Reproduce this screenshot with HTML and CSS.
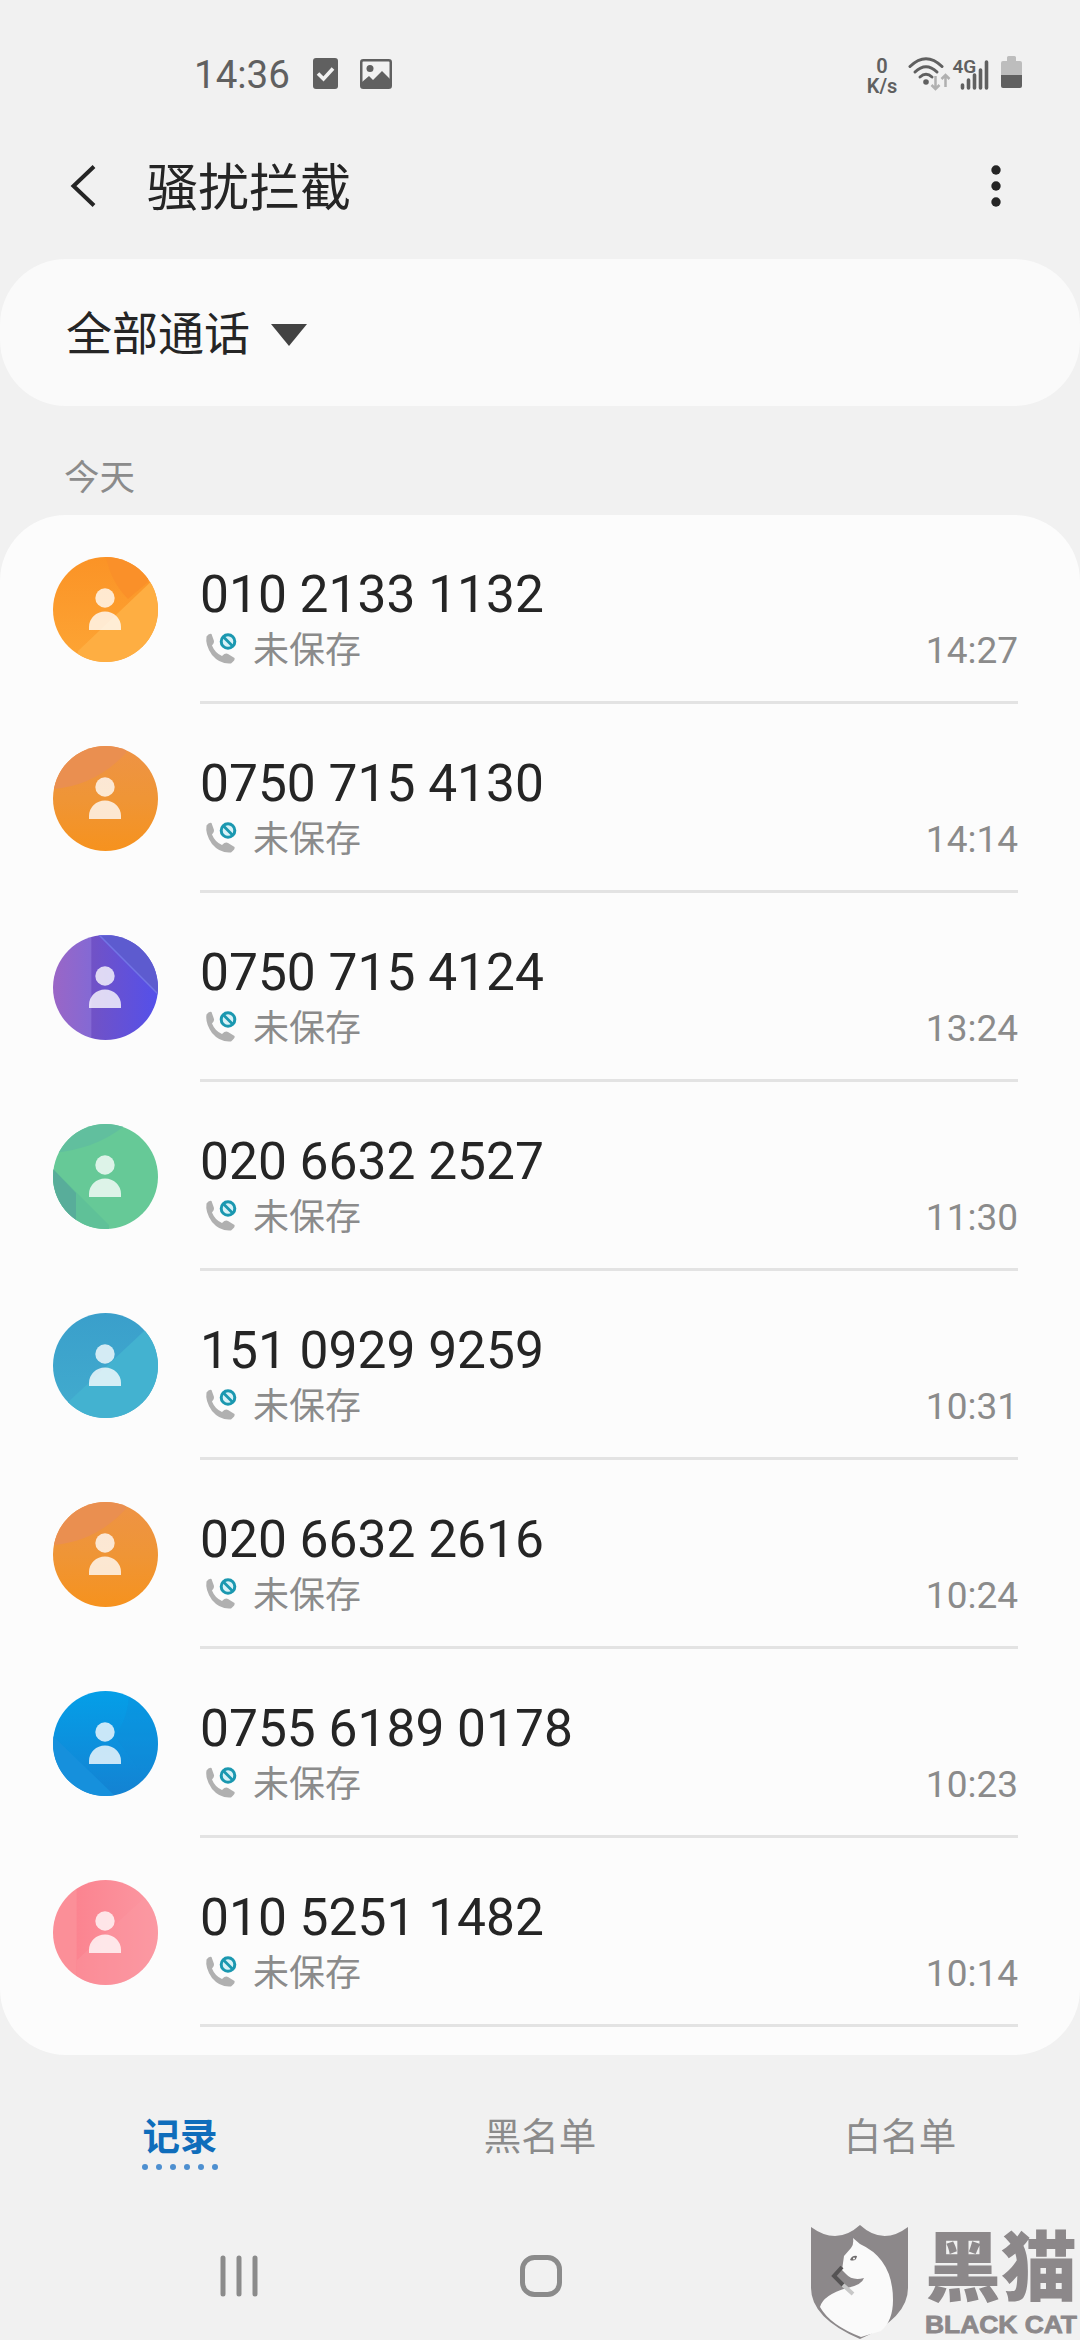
FILE: index.html
```html
<!DOCTYPE html>
<html lang="zh-CN">
<head>
<meta charset="utf-8">
<title>骚扰拦截</title>
<link rel="stylesheet" href="styles.css">
</head>
<body>
<svg class="defs" width="0" height="0">
  <defs>
    <clipPath id="round"><circle cx="52.5" cy="52.5" r="52.5"/></clipPath>
    <linearGradient id="gAmber" x1="0" y1="0" x2="0" y2="1"><stop offset="0" stop-color="#fb9326"/><stop offset="1" stop-color="#fda535"/></linearGradient>
    <linearGradient id="gOrange" x1="0" y1="0" x2="0" y2="1"><stop offset="0" stop-color="#ee9345"/><stop offset=".5" stop-color="#ef9536"/><stop offset="1" stop-color="#f6921e"/></linearGradient>
    <linearGradient id="gPurple"><stop offset="0" stop-color="#9a66c6"/><stop offset=".36" stop-color="#8469d4"/><stop offset=".37" stop-color="#7152c6"/><stop offset="1" stop-color="#5450ea"/></linearGradient>
    <linearGradient id="gBlue" x1="0" y1="0" x2="0" y2="1"><stop offset="0" stop-color="#049fe8"/><stop offset="1" stop-color="#1482d2"/></linearGradient>
    <linearGradient id="gPink"><stop offset="0" stop-color="#fb8f98"/><stop offset=".22" stop-color="#fb8f98"/><stop offset=".23" stop-color="#fb8490"/><stop offset="1" stop-color="#fb98a2"/></linearGradient>
    <linearGradient id="gCyan" x1="0" y1="0" x2="0" y2="1"><stop offset="0" stop-color="#3a9fcb"/><stop offset="1" stop-color="#42acce"/></linearGradient>
    <symbol id="person" viewBox="0 0 105 105"><circle cx="52" cy="41" r="9.7"/><path d="M36 73v-3a16 15.500 0 0 1 32 0v3z"/></symbol>
    <symbol id="amber" viewBox="0 0 105 105"><g clip-path="url(#round)"><path fill="url(#gAmber)" d="M0 0h105v105H0z"/><path fill="#fa9029" d="M53 0q5 25 22 42l20-17V0z"/><path fill="#feae42" d="M105 18L25 94v11h80z"/></g></symbol>
    <symbol id="orange" viewBox="0 0 105 105"><g clip-path="url(#round)"><path fill="url(#gOrange)" d="M0 0h105v105H0z"/><path fill="#ea8f50" d="M0 43Q42 40 73 7V0H0z"/></g></symbol>
    <symbol id="purple" viewBox="0 0 105 105"><g clip-path="url(#round)"><path fill="url(#gPurple)" d="M0 0h105v105H0z"/><path fill="#5d5bcf" stroke="#7274e5" stroke-width="1.500" d="M46 0l60 60V-2z"/></g></symbol>
    <symbol id="green" viewBox="0 0 105 105"><g clip-path="url(#round)"><path fill="#66c997" d="M0 0h105v105H0z"/><path fill="#61bf9e" d="M0 29Q42 25 70 3V0H0z"/><path fill="#5fc198" d="M0 45l56 56v4H0z"/><path fill="#58ad9a" d="M0 45l23 24v36H0z"/></g></symbol>
    <symbol id="cyan" viewBox="0 0 105 105"><g clip-path="url(#round)"><path fill="url(#gCyan)" d="M0 0h105v105H0z"/><path fill="#43b2d0" d="M105 5L12 92v13h93z"/></g></symbol>
    <symbol id="blue" viewBox="0 0 105 105"><g clip-path="url(#round)"><path fill="url(#gBlue)" d="M0 0h105v105H0z"/><path fill="#1690dc" d="M0 45l62 60H0z"/><path fill="#0f8bd6" d="M76 0Q76 26 62 45l43 60V0z" opacity=".3"/></g></symbol>
    <symbol id="pink" viewBox="0 0 105 105"><g clip-path="url(#round)"><path fill="url(#gPink)" d="M0 0h105v105H0z"/><path fill="#fc9aa4" opacity=".35" d="M105 5L24 80v25h81z"/></g></symbol>
    <symbol id="blocked" viewBox="0 0 32 36"><path fill="#b0b0b0" d="M1.500 5.500Q4 2 6.500 3l2.500 7q.5 2-2 4.500 3 7.500 10 10.500 3.500-3.500 6-2l6.500 4q1 2-3.500 5.500Q15 33.500 7 24 0 14 1.500 5.500z"/><circle cx="23" cy="10.500" r="8.700" fill="#fcfcfc"/><circle cx="23" cy="10.500" r="6.800" fill="#d9f2f7" stroke="#1b98b0" stroke-width="3"/><path d="M18.500 6l9 9" stroke="#1b98b0" stroke-width="2.800"/></symbol>
  </defs>
</svg>
<div class="screen">
  <header class="status">
    <span class="clock">14:36</span>
    <svg class="st-check" viewBox="0 0 25 31"><rect width="25" height="31" rx="3" fill="#606060"/><path d="M5 15.500l5.500 5.500L20 10.500" fill="none" stroke="#f1f1f1" stroke-width="3.600"/></svg>
    <svg class="st-image" viewBox="0 0 32 30"><rect x="1.250" y="1.250" width="29.500" height="27.500" rx="2" fill="none" stroke="#606060" stroke-width="2.500"/><circle cx="10" cy="9.500" r="3.500" fill="#606060"/><path d="M2 23l7-6 4 4 9-9 8 8v9H2z" fill="#606060"/></svg>
    <span class="rate"><b>0</b><b>K/s</b></span>
    <svg class="st-signal" viewBox="0 0 118 36">
      <g fill="none" stroke="#606060" stroke-width="3" stroke-linecap="round"><path d="M3 10.500Q19 -5 35 10.500"/><path d="M8 16Q19 5.500 30 16"/><path d="M13 21Q19 15.500 25 21"/></g>
      <circle cx="19" cy="26" r="2.800" fill="#606060"/>
      <path d="M28.500 20v13m-4-4l4 4 4-4M38.500 31V19m-4 4l4-4 4 4" fill="none" stroke="#b0b0b0" stroke-width="2.500"/>
      <text x="45.500" y="16.500" class="net">4G</text>
      <path d="M55.500 29v3M61.500 24v8M67.500 19v13M73.500 14v18M79.500 6v26" stroke="#606060" stroke-width="3.600" stroke-linecap="round"/>
      <path d="M100 3V1.500a1.500 1.500 0 0 1 1.500-1.500h6a1.500 1.500 0 0 1 1.500 1.500V5h4q2 0 2 2v12H94V7q0-2 2-2h4z" fill="#bdbdbd"/><path d="M94 19h21v11q0 2-2 2H96q-2 0-2-2z" fill="#606060"/>
    </svg>
  </header>
  <div class="titlebar">
    <svg class="back" viewBox="0 0 26 42"><path d="M24 1.500L3.500 21 24 40.500" fill="none" stroke="#252525" stroke-width="4"/></svg>
    <h1>骚扰拦截</h1>
    <svg class="more" viewBox="0 0 10 42" fill="#252525"><circle cx="5" cy="5" r="4.700"/><circle cx="5" cy="21" r="4.700"/><circle cx="5" cy="37" r="4.700"/></svg>
  </div>
  <div class="filter">全部通话<svg viewBox="0 0 36 22"><path d="M0 0h36L18 22z" fill="#424242"/></svg></div>
  <h2>今天</h2>
  <main class="calls">
    <div class="call"><svg class="avatar"><use href="#amber"/><use href="#person" class="who"/></svg><div class="info"><div class="num">010 2133 1132</div><div class="meta"><svg class="bl"><use href="#blocked"/></svg><span>未保存</span><time>14:27</time></div></div></div>
    <div class="call"><svg class="avatar"><use href="#orange"/><use href="#person" class="who"/></svg><div class="info"><div class="num">0750 715 4130</div><div class="meta"><svg class="bl"><use href="#blocked"/></svg><span>未保存</span><time>14:14</time></div></div></div>
    <div class="call"><svg class="avatar"><use href="#purple"/><use href="#person" class="who"/></svg><div class="info"><div class="num">0750 715 4124</div><div class="meta"><svg class="bl"><use href="#blocked"/></svg><span>未保存</span><time>13:24</time></div></div></div>
    <div class="call"><svg class="avatar"><use href="#green"/><use href="#person" class="who"/></svg><div class="info"><div class="num">020 6632 2527</div><div class="meta"><svg class="bl"><use href="#blocked"/></svg><span>未保存</span><time>11:30</time></div></div></div>
    <div class="call"><svg class="avatar"><use href="#cyan"/><use href="#person" class="who"/></svg><div class="info"><div class="num">151 0929 9259</div><div class="meta"><svg class="bl"><use href="#blocked"/></svg><span>未保存</span><time>10:31</time></div></div></div>
    <div class="call"><svg class="avatar"><use href="#orange"/><use href="#person" class="who"/></svg><div class="info"><div class="num">020 6632 2616</div><div class="meta"><svg class="bl"><use href="#blocked"/></svg><span>未保存</span><time>10:24</time></div></div></div>
    <div class="call"><svg class="avatar"><use href="#blue"/><use href="#person" class="who"/></svg><div class="info"><div class="num">0755 6189 0178</div><div class="meta"><svg class="bl"><use href="#blocked"/></svg><span>未保存</span><time>10:23</time></div></div></div>
    <div class="call"><svg class="avatar"><use href="#pink"/><use href="#person" class="who"/></svg><div class="info"><div class="num">010 5251 1482</div><div class="meta"><svg class="bl"><use href="#blocked"/></svg><span>未保存</span><time>10:14</time></div></div></div>
  </main>
  <nav class="tabs">
    <div class="tab active">记录<svg viewBox="0 0 76 6" fill="#4d8fd0"><circle cx="3" cy="3" r="3"/><circle cx="17" cy="3" r="3"/><circle cx="31" cy="3" r="3"/><circle cx="45" cy="3" r="3"/><circle cx="59" cy="3" r="3"/><circle cx="73" cy="3" r="3"/></svg></div>
    <div class="tab">黑名单</div>
    <div class="tab">白名单</div>
  </nav>
  <footer class="softkeys">
    <svg class="recents" viewBox="0 0 38 42"><path d="M3 3v36M19 3v36M35 3v36" stroke="#8b8b8b" stroke-width="5" stroke-linecap="round"/></svg>
    <svg class="home" viewBox="0 0 42 42"><rect x="2.500" y="2.500" width="37" height="37" rx="12" fill="none" stroke="#8b8b8b" stroke-width="5"/></svg>
  </footer>
  <svg class="brand" viewBox="0 0 270 120">
    <path fill="#8c888a" d="M1 7q26 19 49-2 23 21 48 2v61q0 30-48 51Q1 98 1 68z"/>
    <path fill="#fafafa" d="M43 18l7 6q33 15 33 56 0 21-12 31l-20 6Q20 105 10 87q3-12 27-19 15-3 17-10-12 3-18-4l-4-4 2-14 7-8q3-3 2-10z"/>
    <path fill="#6f6c6d" d="M40 40q2-5 7-4-1 6-7 4z"/><circle cx="44" cy="38.500" r="1" fill="#fff"/>
    <path d="M32 47l-8 9 9 9" fill="none" stroke="#555354" stroke-width="4"/><path d="M33 65l10 9" stroke="#c8c8c8" stroke-width="4"/>
    <text class="zh" x="115" y="75">黑猫</text>
    <text class="en" x="115" y="113" textLength="152" lengthAdjust="spacingAndGlyphs">BLACK CAT</text>
  </svg>
</div>
</body>
</html>
```
FILE: styles.css
```css
* { box-sizing: border-box; margin: 0; padding: 0; }
body { width: 1080px; height: 2340px; overflow: hidden; background: #f1f1f1; color: #252525; font-family: Roboto, "Noto Sans CJK SC", sans-serif; }
svg { display: block; flex: none; }
.defs { position: absolute; }
.screen { position: relative; display: flex; flex-direction: column; width: 1080px; height: 2340px; }
.status { display: flex; align-items: flex-start; height: 115px; padding: 56px 0 0 194px; color: #606060; }
.clock { width: 119px; font-size: 38.500px; line-height: 38px; }
.st-check { width: 25px; height: 31px; margin-top: 2px; }
.st-image { width: 32px; height: 30px; margin: 3px 0 0 22px; }
.rate { display: flex; flex-direction: column; align-items: center; width: 34px; margin-left: 473px; font-size: 20px; line-height: 20px; }
.rate b { font-weight: 600; }
.st-signal { width: 118px; height: 36px; margin-left: 8px; }
.net { font: 600 19px Roboto, sans-serif; fill: #606060; }
.titlebar { display: flex; align-items: center; height: 144px; padding: 0 79px 2px 70px; }
.back { width: 26px; height: 42px; }
h1 { flex: 1; margin-left: 51px; padding-top: 6px; font-size: 51px; line-height: 60px; font-weight: 400; }
.more { width: 10px; height: 42px; }
.filter { display: flex; align-items: center; height: 147px; padding: 0 0 5px 66px; border-radius: 66px; background: #fafafa; font-size: 46px; }
.filter svg { width: 36px; height: 22px; margin: 9px 0 0 21px; }
h2 { height: 109px; padding-left: 64px; font-size: 35.500px; line-height: 145px; font-weight: 400; color: #8b8b8b; }
.calls { height: 1540px; border-radius: 66px; background: #fcfcfc; }
.call { display: flex; height: 189px; padding: 0 62px 0 53px; }
.avatar { width: 105px; height: 105px; margin: 42px 42px 0 0; }
.who { fill: #fff; fill-opacity: .78; }
.info { flex: 1; padding-top: 49px; border-bottom: 3px solid #e3e3e3; }
.num { font-size: 51.500px; line-height: 62px; }
.meta { display: flex; align-items: center; height: 50px; font-size: 36px; line-height: 50px; color: #8b8b8b; }
.bl { width: 32px; height: 36px; margin: -4px 16px 0 5px; }
.meta time { margin-left: auto; font-size: 37px; }
.tabs { display: grid; grid-template-columns: repeat(3, 360px); height: 155px; padding-top: 54px; text-align: center; }
.tab { font-size: 37.500px; line-height: 56px; color: #8b8b8b; }
.active { color: #0f6dbb; font-weight: 700; }
.active svg { width: 76px; height: 6px; margin: -1px auto 0; }
.softkeys { display: flex; height: 130px; padding: 45px 0 0 220px; gap: 262px; }
.recents { width: 38px; height: 42px; }
.home { width: 42px; height: 42px; }
/* Logo stamp that overlays the system keys */
.brand { position: absolute; left: 810px; top: 2220px; width: 270px; height: 120px; }
.zh { font: 900 76px "Noto Sans CJK SC", sans-serif; fill: #8c888a; }
.en { font: 900 23px "Liberation Sans", sans-serif; fill: #8c888a; stroke: #8c888a; stroke-width: .8; }
```
